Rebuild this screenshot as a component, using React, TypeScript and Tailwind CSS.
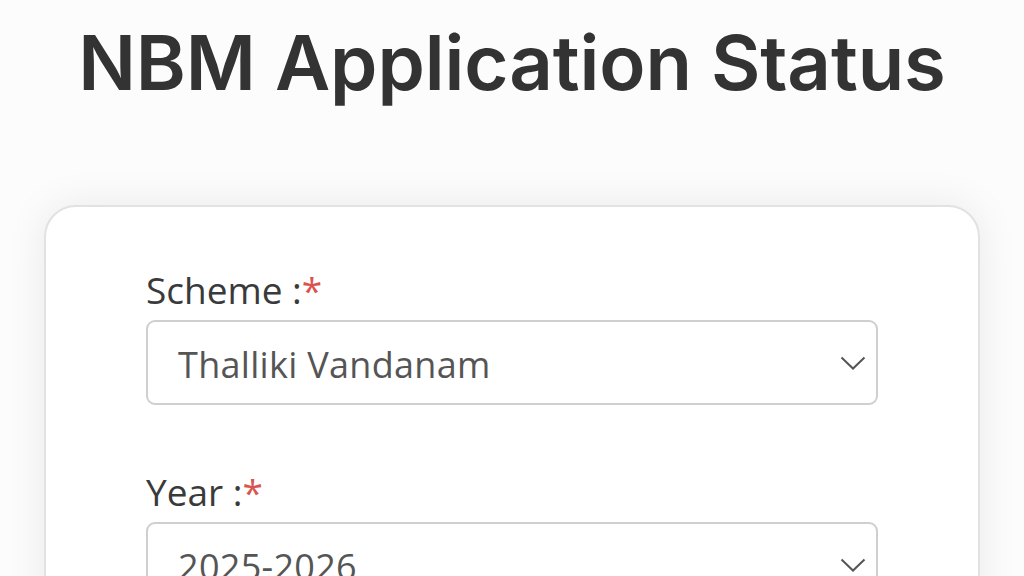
export default function App() {
  return (
    <div className="min-h-[576px] w-[1024px] overflow-hidden bg-[#fcfcfc] [font-family:'Open_Sans',sans-serif]">
      <h1 className="pt-[14px] text-center text-[76px] font-semibold leading-[96px] tracking-[-0.1px] text-[#333] [font-family:Inter,sans-serif]">
        NBM Application Status
      </h1>
      <div className="mx-[44px] mt-[95px] rounded-[32px] border-2 border-[#e2e2e2] bg-white px-[100px] pt-[55px] pb-10 shadow-[0_0_40px_rgba(0,0,0,0.08)]">
        <Field label="Scheme :" value="Thalliki Vandanam" />
        <div className="h-[59px]" />
        <Field label="Year :" value="2025-2026" />
      </div>
    </div>
  );
}

function Field({ label, value }: { label: string; value: string }) {
  return (
    <div>
      <label className="block text-[37px] leading-[56px] text-[#3a3a3a]">
        {label}
        <span className="text-[#d9534f]">*</span>
      </label>
      <div className="mt-[2px] flex h-[85px] items-center justify-between rounded-[9px] border-2 border-[#cfcfcf] pl-[30px] pr-[10px]">
        <span className="pt-[4px] text-[36px] tracking-[0.3px] text-[#555]">{value}</span>
        <svg width="26" height="16" viewBox="0 0 26 16" fill="none">
          <path d="M1.5 2.5 L13 13.5 L24.5 2.5" stroke="#555" strokeWidth="2" />
        </svg>
      </div>
    </div>
  );
}
